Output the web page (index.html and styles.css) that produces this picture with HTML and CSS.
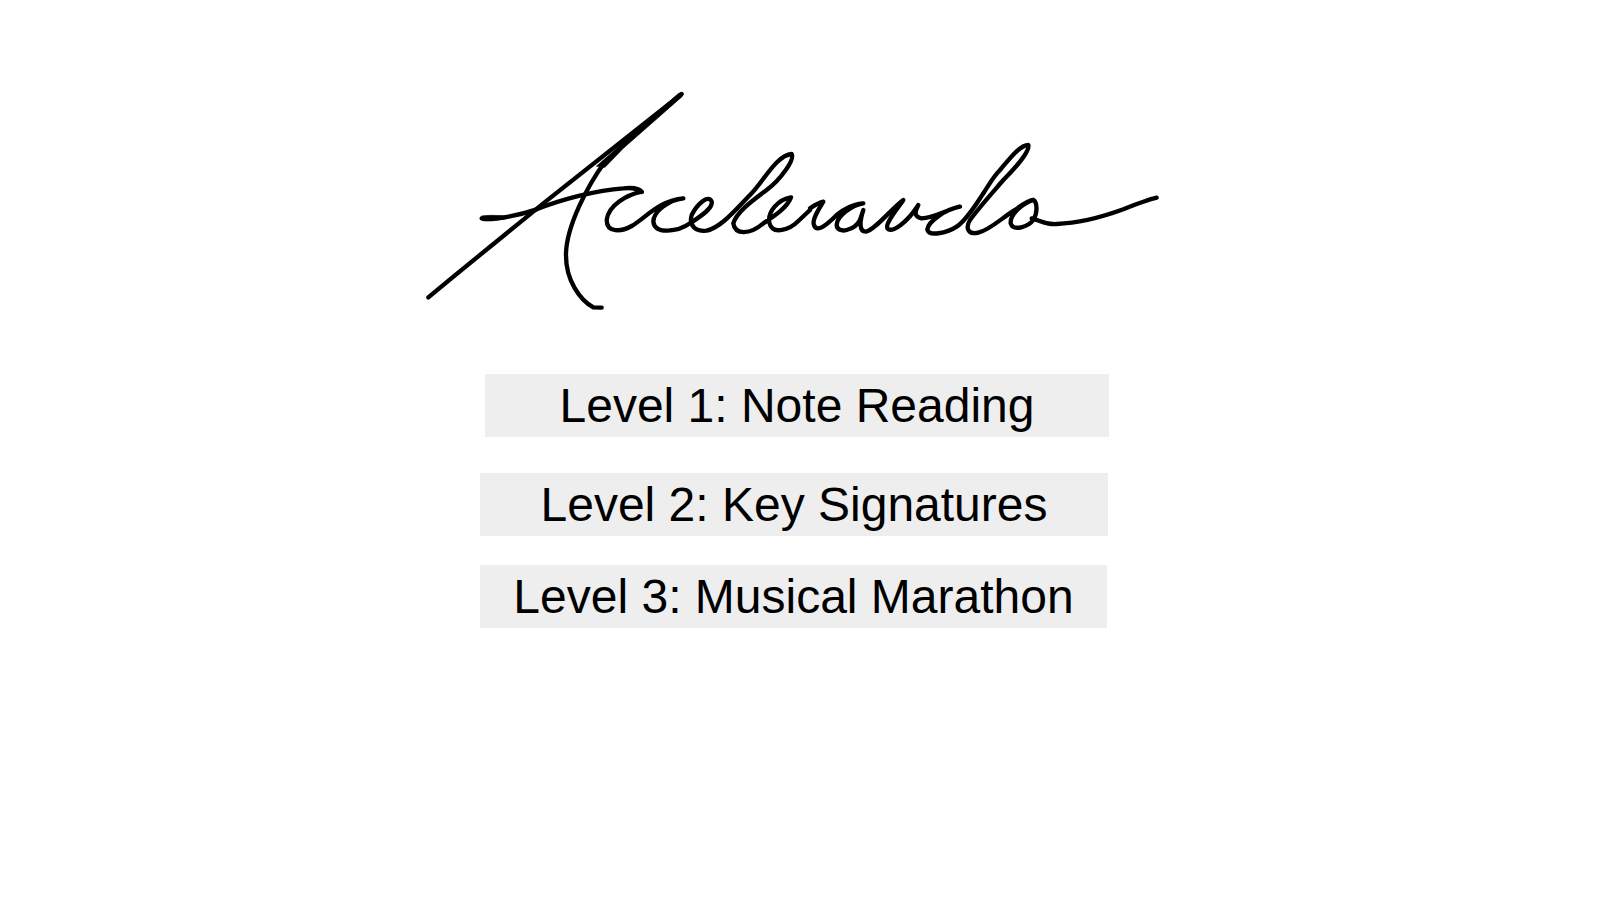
FILE: index.html
```html
<!DOCTYPE html>
<html lang="en">
<head>
    <meta charset="UTF-8">
    <title>Accelerando</title>
    <link rel="stylesheet" href="styles.css">
</head>
<body>
    <header class="logo">
        <svg class="signature" viewBox="0 0 2280 720" aria-label="Accelerando">
            <g class="pen">
                <path d="M55 652 C200 532 300 452 400 370 C540 260 680 150 815 42"/>
                <path class="ink" d="M560 258 L806 40 Q820 36 816 50 L640 205 L585 262 Z"/>
                <path class="ink" d="M215 408 Q240 404 290 408 L290 416 Q240 426 218 422 Z"/>
                <path d="M215 415 C260 420 330 405 380 388 C450 360 560 330 640 325 C670 322 690 328 695 336"/>
                <path d="M585 245 C530 320 470 440 468 520 C466 600 510 660 550 682 L575 683"/>
            </g>
            <g class="pen" transform="translate(540 180)">
                <path d="M155 155 C110 165 55 195 50 240 C50 280 95 275 125 258 C165 235 210 180 280 175 C235 180 190 215 190 245 C195 285 265 275 300 250 C330 230 370 205 365 185 C355 160 320 195 305 225 C295 260 320 275 350 272 C395 262 440 205 480 165 C520 125 560 45 605 42 C615 60 570 120 530 150 C490 180 440 215 430 250 C435 285 480 285 520 250 C550 230 590 205 603 172 C565 178 532 215 538 248 C548 288 600 268 625 243 L660 210"/>
            </g>
            <g class="pen" transform="translate(1110 270)">
                <path d="M90 115 C105 105 115 98 130 95 C115 120 95 150 102 165 C110 190 140 165 170 135 C190 118 225 100 250 100 C215 105 170 140 170 165 C172 195 225 180 240 150 L250 120 C240 150 235 185 258 185 C285 180 335 115 370 90 C350 120 315 160 322 175 C335 190 380 160 415 105 C405 125 400 140 425 145 C460 145 510 115 540 110 C495 118 445 155 442 178 C445 200 500 190 530 170 C560 150 590 100 610 70"/>
            </g>
            <g class="pen" transform="translate(1080 120)">
                <path d="M640 220 C660 190 670 170 690 150 C720 115 750 75 775 75 C780 95 730 150 700 180 C670 215 625 265 600 300 C585 325 595 345 625 338 C660 330 700 290 735 270 C755 255 775 240 790 240 C760 250 720 280 722 310 C730 335 775 320 790 300 C805 275 800 245 790 240"/>
                <path d="M785 295 C810 300 825 315 860 312 C920 310 1000 290 1060 268 C1100 252 1130 240 1160 233"/>
            </g>
        </svg>
    </header>

    <main class="levels">
        <a class="level level-one">Level 1: Note Reading</a>
        <a class="level level-two">Level 2: Key Signatures</a>
        <a class="level level-three">Level 3: Musical Marathon</a>
    </main>
</body>
</html>
```

FILE: styles.css
```css
body {
    margin: 0;
    background-color: white;
    font-family: "Liberation Sans", Arial, sans-serif;
    color: black;
}
.logo {
    padding: 80px 0 0 410px;
}
.signature {
    display: block;
    width: 760px;
    height: 240px;
}
.pen {
    fill: none;
    stroke: black;
    stroke-width: 13;
    stroke-linecap: round;
    stroke-linejoin: round;
}
.pen .ink {
    fill: black;
    stroke-width: 2;
}
.levels {
    display: flex;
    flex-direction: column;
    align-items: flex-start;
    padding: 54px 0 0 480px;
}
.level {
    height: 63px;
    line-height: 63px;
    background-color: #eeeeee;
    text-align: center;
    font-size: 48px;
}
.level-one {
    width: 624px;
    margin-left: 5px;
}
.level-two {
    width: 628px;
    margin-top: 36px;
}
.level-three {
    width: 627px;
    margin-top: 29px;
}
```
